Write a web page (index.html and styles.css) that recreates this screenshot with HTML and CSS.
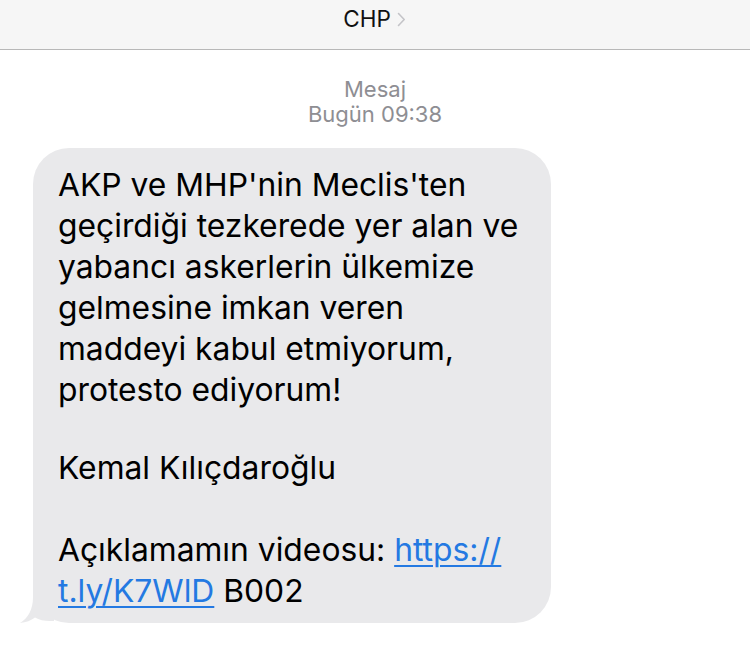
FILE: index.html
```html
<!DOCTYPE html>
<html lang="tr">
<head>
<meta charset="utf-8">
<link rel="stylesheet" href="styles.css">
</head>
<body>
<header class="topbar">
  <span class="contact">CHP</span>
  <svg class="chev" width="9" height="15" viewBox="0 0 9 15"><path d="M1.5 1.5 L7.2 7.5 L1.5 13.5" fill="none" stroke="#c4c4c8" stroke-width="1.6" stroke-linecap="round" stroke-linejoin="round"/></svg>
</header>
<main class="thread">
  <div class="meta">
    <div>Mesaj</div>
    <div>Bugün 09:38</div>
  </div>
  <div class="row">
    <div class="bubble">
      <p class="first">AKP ve MHP'nin Meclis'ten<br>geçirdiği tezkerede yer alan ve<br>yabancı askerlerin ülkemize<br>gelmesine imkan veren<br>maddeyi kabul etmiyorum,<br>protesto ediyorum!</p>
      <p>Kemal Kılıçdaroğlu</p>
      <p>Açıklamamın videosu: <a href="#">https://<br>t.ly/K7WlD</a> B002</p>
      <svg class="tail" width="34" height="38" viewBox="0 0 34 38"><path d="M13 0 L34 0 L34 36 L30 36 C24 36 19 35 15 32.5 C11 35.5 6 37.5 0 38 C8 33 13 25 13 12 Z" fill="#e9e9eb"/></svg>
    </div>
  </div>
</main>
</body>
</html>
```
FILE: styles.css
```css
html, body {
  margin: 0;
  padding: 0;
  background: #ffffff;
}
body {
  font-family: Inter, "Liberation Sans", sans-serif;
  width: 750px;
  height: 654px;
  overflow: hidden;
}
.topbar {
  height: 50px;
  background: #f6f6f6;
  border-bottom: 1.5px solid #b8b8b8;
  display: flex;
  align-items: flex-start;
  justify-content: center;
  gap: 6px;
  padding-top: 5px;
  padding-right: 1px;
  box-sizing: border-box;
}
.contact {
  font-size: 22.5px;
  line-height: 28px;
  color: #111;
}
.chev {
  margin-top: 7px;
}
.thread {
  padding-top: 27px;
}
.meta {
  text-align: center;
  color: #8e8e93;
  font-size: 22px;
  line-height: 25px;
}
.row {
  display: flex;
  padding-left: 33px;
  margin-top: 21px;
}
.bubble {
  position: relative;
  width: 518px;
  box-sizing: border-box;
  background: #e9e9eb;
  border-radius: 36px;
  padding: 16px 16px 12px 25px;
  font-size: 31.8px;
  line-height: 41px;
  color: #000;
}
.bubble p {
  margin: 0 0 41px 0;
}
.bubble p.first {
  margin-bottom: 37px;
}
.bubble p:last-of-type {
  margin-bottom: 0;
}
.bubble a {
  color: #2479e2;
  text-decoration: underline;
  text-decoration-thickness: 1.5px;
  text-underline-offset: 4px;
}
.tail {
  position: absolute;
  left: -13px;
  bottom: 0;
}
```
